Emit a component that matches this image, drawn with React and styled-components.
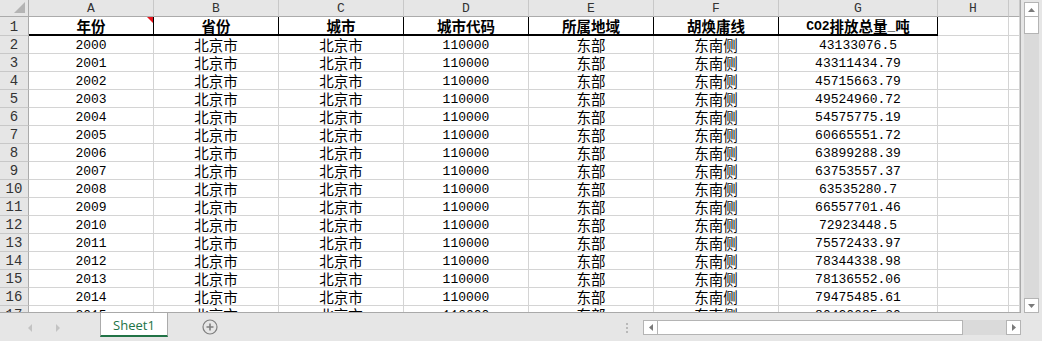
import React from 'react'
import styled, { createGlobalStyle } from 'styled-components'

const GlobalStyle = createGlobalStyle`
  body {
    margin: 0;
    background: #e6e6e6;
  }
`

const COLS = ['A', 'B', 'C', 'D', 'E', 'F', 'G', 'H', '']
const HEAD = ['年份', '省份', '城市', '城市代码', '所属地域', '胡焕庸线', 'CO2排放总量_吨']

const VALUES = [
  '43133076.5', '43311434.79', '45715663.79', '49524960.72', '54575775.19',
  '60665551.72', '63899288.39', '63753557.37', '63535280.7', '66557701.46',
  '72923448.5', '75572433.97', '78344338.98', '78136552.06', '79475485.61',
  '80420685.30',
]

const ROWS = VALUES.map((v, i) => [String(2000 + i), '北京市', '北京市', '110000', '东部', '东南侧', v])

// split text so that han characters can get their own size
const runs = text =>
  text.split(/([\u4e00-\u9fff]+)/).map((part, i) =>
    /[\u4e00-\u9fff]/.test(part) ? <Han key={i}>{part}</Han> : part
  )

const App = () => {
  return (
    <Window>
      <GlobalStyle />
      <Main>
        <Sheet>
          <Corner>
            <svg width="11" height="11" viewBox="0 0 11 11">
              <polygon points="11,0 11,11 0,11" fill="#b4b4b4" />
            </svg>
          </Corner>
          {COLS.map((c, i) => (
            <ColHead key={c + i}>{c}</ColHead>
          ))}

          <RowHead $first>1</RowHead>
          {COLS.map((c, i) => (
            <Cell key={'h' + i} $title={i < 7}>
              {HEAD[i] ? runs(HEAD[i]) : null}
              {i === 0 && <Flag />}
            </Cell>
          ))}

          {ROWS.map((row, r) => (
            <React.Fragment key={r}>
              <RowHead>{r + 2}</RowHead>
              {COLS.map((c, i) => (
                <Cell key={i}>{row[i] ? runs(row[i]) : null}</Cell>
              ))}
            </React.Fragment>
          ))}
        </Sheet>

        <VScroll>
          <Track>
            <ScrollBtn>
              <svg width="7" height="4" viewBox="0 0 7 4">
                <polygon points="0,4 7,4 3.5,0" fill="#7a7a7a" />
              </svg>
            </ScrollBtn>
            <Thumb />
            <Spacer />
            <ScrollBtn>
              <svg width="7" height="4" viewBox="0 0 7 4">
                <polygon points="0,0 7,0 3.5,4" fill="#7a7a7a" />
              </svg>
            </ScrollBtn>
          </Track>
        </VScroll>
      </Main>

      <BottomBar>
        <Nav>
          <svg width="4" height="8" viewBox="0 0 4 8">
            <polygon points="4,0 4,8 0,4" fill="#c3c3c3" />
          </svg>
          <svg width="4" height="8" viewBox="0 0 4 8">
            <polygon points="0,0 0,8 4,4" fill="#c3c3c3" />
          </svg>
        </Nav>
        <Tab>Sheet1</Tab>
        <AddBtn>
          <svg width="16" height="16" viewBox="0 0 16 16">
            <circle cx="8" cy="8" r="7" fill="none" stroke="#7f7f7f" strokeWidth="1.2" />
            <path d="M8 4.5v7M4.5 8h7" stroke="#7f7f7f" strokeWidth="1.6" />
          </svg>
        </AddBtn>
        <Spacer />
        <Dots>
          <i />
          <i />
          <i />
        </Dots>
        <HScroll>
          <HBtn>
            <svg width="4" height="7" viewBox="0 0 4 7">
              <polygon points="4,0 4,7 0,3.5" fill="#7a7a7a" />
            </svg>
          </HBtn>
          <HThumb />
          <Spacer />
          <HBtn>
            <svg width="4" height="7" viewBox="0 0 4 7">
              <polygon points="0,0 0,7 4,3.5" fill="#7a7a7a" />
            </svg>
          </HBtn>
        </HScroll>
      </BottomBar>
    </Window>
  )
}

export default App
//----------------------------------------------------------------

const Window = styled.div`
  width: 1042px;
  height: 341px;
  background: #e6e6e6;
  display: flex;
  flex-direction: column;
  overflow: hidden;
`

const Main = styled.div`
  display: flex;
  height: 313px;
`

const Sheet = styled.div`
  width: 1020px;
  height: 312px;
  background: #fff;
  border-right: 1px solid #a9a9a9;
  border-bottom: 1px solid #a9a9a9;
  overflow: hidden;
  display: grid;
  grid-template-columns: 29px repeat(6, 125px) 159px 71px 1fr;
  grid-template-rows: 17px 19px;
  grid-auto-rows: 18px;
  font-family: 'Liberation Mono', 'Noto Sans CJK SC', monospace;
  font-size: 13px;
  color: #000;
`

const HeadBase = styled.div`
  background: #e6e6e6;
  color: #333;
  display: flex;
  align-items: center;
  justify-content: center;
  box-sizing: border-box;
`

const Corner = styled(HeadBase)`
  border-right: 1px solid #ababab;
  border-bottom: 1px solid #ababab;
  align-items: flex-end;
  justify-content: flex-end;
  padding: 0 3px 3px 0;
`

const ColHead = styled(HeadBase)`
  border-right: 1px solid #c8c8c8;
  border-bottom: 1px solid #ababab;
  padding-top: 1px;
`

const RowHead = styled(HeadBase)`
  border-right: 1px solid #ababab;
  border-bottom: 1px solid #c8c8c8;
  font-size: 14px;
  padding-top: ${p => (p.$first ? '1px' : '0')};
`

const Cell = styled.div`
  position: relative;
  box-sizing: border-box;
  display: flex;
  align-items: center;
  justify-content: center;
  white-space: nowrap;
  border-right: 1px solid ${p => (p.$title ? '#000' : '#d4d4d4')};
  border-bottom: ${p => (p.$title ? '2px solid #000' : '1px solid #d4d4d4')};
  font-weight: ${p => (p.$title ? 700 : 400)};
  padding-top: 1px;
`

const Han = styled.span`
  font-family: 'Noto Sans CJK SC', sans-serif;
  font-size: 14.5px;
  line-height: 1;
`

const Flag = styled.span`
  position: absolute;
  top: 0;
  right: 0;
  width: 0;
  height: 0;
  border-top: 6px solid #e8141c;
  border-left: 6px solid transparent;
`

const VScroll = styled.div`
  flex: 1;
  display: flex;
  padding: 2px 3px 0 3px;
`

const Track = styled.div`
  width: 15px;
  display: flex;
  flex-direction: column;
  background: #dadada;
`

const ScrollBtn = styled.div`
  height: 15px;
  box-sizing: border-box;
  background: #fff;
  border: 1px solid #b4b4b4;
  display: flex;
  align-items: center;
  justify-content: center;
`

const Thumb = styled.div`
  height: 17px;
  box-sizing: border-box;
  background: #fff;
  border: 1px solid #b4b4b4;
  border-top: none;
`

const Spacer = styled.div`
  flex: 1;
`

const BottomBar = styled.div`
  height: 28px;
  display: flex;
  align-items: flex-start;
  padding-right: 21px;
`

const Nav = styled.div`
  width: 100px;
  display: flex;
  gap: 24px;
  padding: 11px 0 0 28px;
  box-sizing: border-box;
`

const Tab = styled.div`
  width: 68px;
  height: 24px;
  box-sizing: border-box;
  background: #fff;
  border-left: 1px solid #ababab;
  border-right: 1px solid #ababab;
  border-bottom: 2px solid #217346;
  color: #217346;
  font-family: 'Open Sans', 'Noto Sans', sans-serif;
  font-size: 13px;
  display: flex;
  align-items: center;
  justify-content: center;
  padding-top: 1px;
`

const AddBtn = styled.div`
  margin: 6px 0 0 34px;
  display: flex;
`

const Dots = styled.div`
  width: 17px;
  padding-top: 10px;
  display: flex;
  flex-direction: column;
  align-items: flex-start;
  gap: 2px;
  i {
    display: block;
    width: 2px;
    height: 2px;
    background: #b9b9b9;
  }
`

const HScroll = styled.div`
  width: 378px;
  height: 15px;
  margin-top: 7px;
  display: flex;
  background: #dadada;
`

const HBtn = styled.div`
  width: 15px;
  height: 15px;
  box-sizing: border-box;
  background: #fff;
  border: 1px solid #b4b4b4;
  display: flex;
  align-items: center;
  justify-content: center;
`

const HThumb = styled.div`
  width: 305px;
  box-sizing: border-box;
  background: #fff;
  border: 1px solid #b4b4b4;
  border-left: none;
`
